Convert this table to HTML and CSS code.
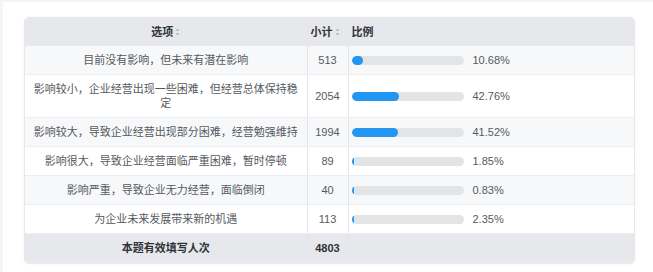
FILE: index.html
```html
<!DOCTYPE html>
<html lang="zh">
<head>
<meta charset="utf-8">
<link rel="stylesheet" href="styles.css">
</head>
<body>
<div class="page">
  <div class="card">
    <table class="stats">
      <colgroup>
        <col class="c-opt">
        <col class="c-num">
        <col class="c-pct">
      </colgroup>
      <thead>
        <tr>
          <th class="opt">选项<svg class="sort" viewBox="0 0 5 8" width="5" height="8"><path d="M2.5 0.5 L4.5 3 L0.5 3 Z M2.5 7.5 L4.5 5 L0.5 5 Z" fill="#b8bcc2"/></svg></th>
          <th class="num">小计<svg class="sort" viewBox="0 0 5 8" width="5" height="8"><path d="M2.5 0.5 L4.5 3 L0.5 3 Z M2.5 7.5 L4.5 5 L0.5 5 Z" fill="#b8bcc2"/></svg></th>
          <th class="pct">比例</th>
        </tr>
      </thead>
      <tbody>
        <tr class="alt">
          <td class="opt">目前没有影响，但未来有潜在影响</td>
          <td class="num">513</td>
          <td class="pct"><div class="ratio"><div class="track"><div class="fill" style="width:10.68%"></div></div><span class="val">10.68%</span></div></td>
        </tr>
        <tr>
          <td class="opt">影响较小，企业经营出现一些困难，但经营总体保持稳定</td>
          <td class="num">2054</td>
          <td class="pct"><div class="ratio"><div class="track"><div class="fill" style="width:42.76%"></div></div><span class="val">42.76%</span></div></td>
        </tr>
        <tr class="alt">
          <td class="opt">影响较大，导致企业经营出现部分困难，经营勉强维持</td>
          <td class="num">1994</td>
          <td class="pct"><div class="ratio"><div class="track"><div class="fill" style="width:41.52%"></div></div><span class="val">41.52%</span></div></td>
        </tr>
        <tr>
          <td class="opt">影响很大，导致企业经营面临严重困难，暂时停顿</td>
          <td class="num">89</td>
          <td class="pct"><div class="ratio"><div class="track"><div class="fill" style="width:1.85%"></div></div><span class="val">1.85%</span></div></td>
        </tr>
        <tr class="alt">
          <td class="opt">影响严重，导致企业无力经营，面临倒闭</td>
          <td class="num">40</td>
          <td class="pct"><div class="ratio"><div class="track"><div class="fill" style="width:0.83%"></div></div><span class="val">0.83%</span></div></td>
        </tr>
        <tr>
          <td class="opt">为企业未来发展带来新的机遇</td>
          <td class="num">113</td>
          <td class="pct"><div class="ratio"><div class="track"><div class="fill" style="width:2.35%"></div></div><span class="val">2.35%</span></div></td>
        </tr>
      </tbody>
      <tfoot>
        <tr>
          <td class="opt">本题有效填写人次</td>
          <td class="num">4803</td>
          <td class="pct"></td>
        </tr>
      </tfoot>
    </table>
  </div>
</div>
</body>
</html>
```
FILE: styles.css
```css
html, body {
  margin: 0;
  padding: 0;
  background: #ffffff;
}

.page {
  width: 653px;
  height: 272px;
  box-sizing: border-box;
  border-top: 2px solid #f3f3f3;
  border-left: 3px solid #f5f5f5;
  padding: 15px 0 0 21px;
  font-family: "Liberation Sans", "Noto Sans CJK SC", sans-serif;
  font-size: 11px;
  color: #555a60;
}

.card {
  width: 609px;
  border: 1px solid #e6e8eb;
  border-radius: 5px;
  overflow: hidden;
  box-shadow: 0 0 3px rgba(0, 0, 0, 0.05);
}

.stats {
  width: 100%;
  border-collapse: collapse;
  table-layout: fixed;
}

.c-opt { width: 282px; }
.c-num { width: 41px; }
.c-pct { width: auto; }

.stats th,
.stats td {
  padding: 7px 8px;
  line-height: 14px;
  border-bottom: 1px solid #eceef1;
  vertical-align: middle;
}

.stats th {
  background: #e6e8eb;
  color: #2f3338;
  font-weight: bold;
  padding-top: 7px;
  padding-bottom: 7px;
  border-bottom: none;
}

.stats .opt {
  text-align: center;
  border-right: 1px solid #e4e6e9;
}

.stats .num {
  text-align: center;
  padding-left: 2px;
  padding-right: 2px;
  border-right: 1px solid #e4e6e9;
}

.stats .pct {
  text-align: left;
  padding-left: 3px;
}

.stats th.num {
  padding-left: 3px;
  padding-right: 0;
  text-align: left;
}

.sort {
  display: inline-block;
  vertical-align: middle;
  margin-left: 2px;
  margin-top: -2px;
}

tbody tr {
  background: #ffffff;
}

tbody tr.alt {
  background: #f7f8fa;
}

tfoot td {
  background: #e6e8eb;
  color: #2f3338;
  font-weight: bold;
  border-bottom: none;
}

.ratio {
  display: flex;
  align-items: center;
  gap: 9px;
}

.track {
  width: 112px;
  height: 9px;
  border-radius: 5px;
  background: #e3e4e6;
  overflow: hidden;
  flex: none;
}

.fill {
  height: 100%;
  min-width: 2px;
  background: #2196f3;
  border-radius: 5px;
}

.val {
  color: #555a60;
}
```
